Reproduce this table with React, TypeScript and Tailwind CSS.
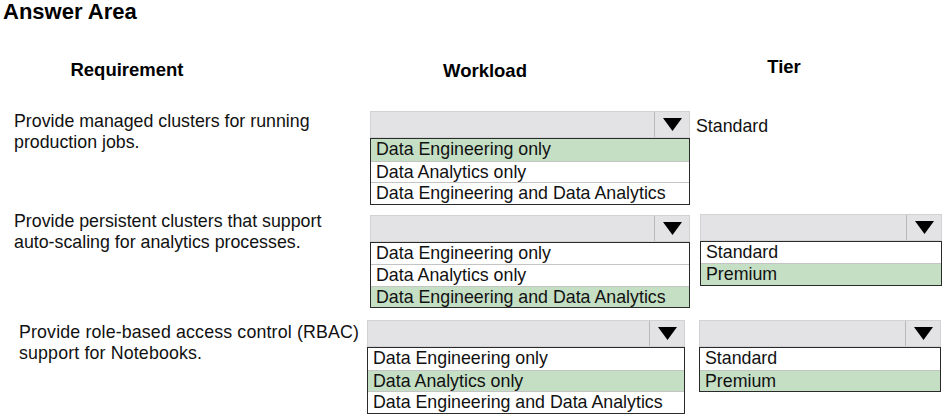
import React from "react";

interface DropdownProps {
  options: string[];
  selected: number;
  width: string;
}

function Arrow() {
  return (
    <svg width="19" height="13" viewBox="0 0 19 13" className="block">
      <polygon points="0,0 19,0 9.5,13" fill="#000" />
    </svg>
  );
}

function Dropdown({ options, selected, width }: DropdownProps) {
  return (
    <div className={`${width} shrink-0`}>
      <div className="flex h-[27px] border border-[#d2d2d4] bg-[#e3e3e6]">
        <div className="flex-1" />
        <div className="flex w-[35px] items-center justify-center border-l border-[#b9b9bc]">
          <Arrow />
        </div>
      </div>
      <div className="border border-[#2a2a2a] bg-white">
        {options.map((opt, i) => (
          <div
            key={opt}
            className={`h-[21.5px] px-[5px] text-[17.8px] leading-[21px] text-[#111] ${
              i === selected ? "bg-[#c5dfc5]" : "bg-white"
            } ${i > 0 ? "border-t border-[#c4c4c4]" : ""}`}
          >
            {opt}
          </div>
        ))}
      </div>
    </div>
  );
}

const workloads = [
  "Data Engineering only",
  "Data Analytics only",
  "Data Engineering and Data Analytics",
];
const tiers = ["Standard", "Premium"];

export default function App() {
  return (
    <div
      className="h-[419px] w-[947px] overflow-hidden bg-white text-[#111]"
      style={{ fontFamily: '"Liberation Sans", Arial, sans-serif' }}
    >
      <div className="pl-[3px] text-[22px] font-bold leading-[24px] text-black">
        Answer Area
      </div>

      {/* column headings */}
      <div className="mt-[36px] flex text-[18.5px] font-bold leading-[20px] text-black">
        <div className="w-[254px] text-center">Requirement</div>
        <div className="ml-[116px] w-[230px] pt-[1px] text-center">Workload</div>
        <div className="ml-[100px] w-[168px] -mt-[3px] text-center">Tier</div>
      </div>

      {/* row 1 */}
      <div className="mt-[30px] flex">
        <div className="w-[370px] shrink-0 pl-[14px] text-[17.8px] leading-[21px]">
          Provide managed clusters for running
          <br />
          production jobs.
        </div>
        <Dropdown options={workloads} selected={0} width="w-[320px]" />
        <div className="ml-[6px] h-[27px] pt-[2px] text-[17.8px] leading-[27px]">Standard</div>
      </div>

      {/* row 2 */}
      <div className="mt-[10px] flex">
        <div className="w-[370px] shrink-0 pl-[14px] -mt-[4px] text-[17.8px] leading-[21px]">
          Provide persistent clusters that support
          <br />
          auto-scaling for analytics processes.
        </div>
        <Dropdown options={workloads} selected={2} width="w-[320px]" />
        <div className="ml-[10px] -mt-[1px]">
          <Dropdown options={tiers} selected={1} width="w-[242px]" />
        </div>
      </div>

      {/* row 3 */}
      <div className="mt-[12px] flex">
        <div className="w-[367px] shrink-0 pl-[19px] pt-[2px] text-[17.8px] tracking-[0.15px] leading-[21px]">
          Provide role-based access control (RBAC)
          <br />
          support for Notebooks.
        </div>
        <Dropdown options={workloads} selected={1} width="w-[318px]" />
        <div className="ml-[14px]">
          <Dropdown options={tiers} selected={1} width="w-[242px]" />
        </div>
      </div>
    </div>
  );
}
